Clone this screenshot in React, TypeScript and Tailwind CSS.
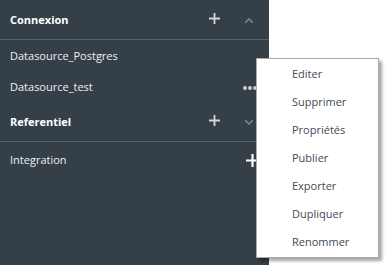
import React from "react";

const menuItems = ["Editer", "Supprimer", "Propriétés", "Publier", "Exporter", "Dupliquer", "Renommer"];

function Plus({ size = 11, className = "" }: { size?: number; className?: string }) {
  return (
    <svg width={size} height={size} viewBox="0 0 12 12" className={className}>
      <path d="M6 0v12M0 6h12" stroke="currentColor" strokeWidth="2" />
    </svg>
  );
}

function Chevron({ up }: { up?: boolean }) {
  return (
    <svg width="8" height="5" viewBox="0 0 8 5" className="text-[#7e8a92]">
      <path d={up ? "M0 5L4 1L8 5" : "M0 0L4 4L8 0"} stroke="currentColor" strokeWidth="1.5" fill="none" />
    </svg>
  );
}

function SectionHeader({ title, up }: { title: string; up?: boolean }) {
  return (
    <div className="flex h-[40px] items-center border-b border-[#56626a] pl-[10px] pr-[16px] pt-[2px]">
      <span className="flex-1 font-bold text-white">{title}</span>
      <Plus className="mr-[25px] -mt-[5px] text-[#d2d6d9]" />
      <Chevron up={up} />
    </div>
  );
}

export default function App() {
  return (
    <div
      className="relative flex h-[265px] w-[387px] bg-white text-[11px]"
      style={{ fontFamily: '"Open Sans", "Noto Sans", sans-serif' }}
    >
      <div className="flex h-full w-[269px] flex-col bg-[#343f47] text-[#eef0f1]">
        <SectionHeader title="Connexion" up />
        <div className="flex h-[31px] items-center pl-[10px] pt-[2px]">Datasource_Postgres</div>
        <div className="flex h-[31px] items-center pl-[10px] pr-[12px] pt-[2px]">
          <span className="flex-1">Datasource_test</span>
          <span className="flex gap-[1px]">
            <span className="h-[4px] w-[4px] rounded-full bg-[#c7cbce]" />
            <span className="h-[4px] w-[4px] rounded-full bg-[#c7cbce]" />
            <span className="h-[4px] w-[4px] rounded-full bg-[#c7cbce]" />
          </span>
        </div>
        <SectionHeader title="Referentiel" />
        <div className="flex h-[34px] items-center pl-[10px] pr-[10px] pt-[2px]">
          <span className="flex-1">Integration</span>
          <Plus size={13} className="text-white" />
        </div>
      </div>

      <div className="absolute left-[256px] top-[58px] flex w-[123px] flex-col border border-[#a9a9a9] bg-white pb-[2px] text-[#3f4957] shadow-[3px_3px_3px_rgba(0,0,0,0.35)]">
        {menuItems.map((item) => (
          <div key={item} className="flex h-[28px] items-center pl-[35px] pt-[2px]">
            {item}
          </div>
        ))}
      </div>
    </div>
  );
}
